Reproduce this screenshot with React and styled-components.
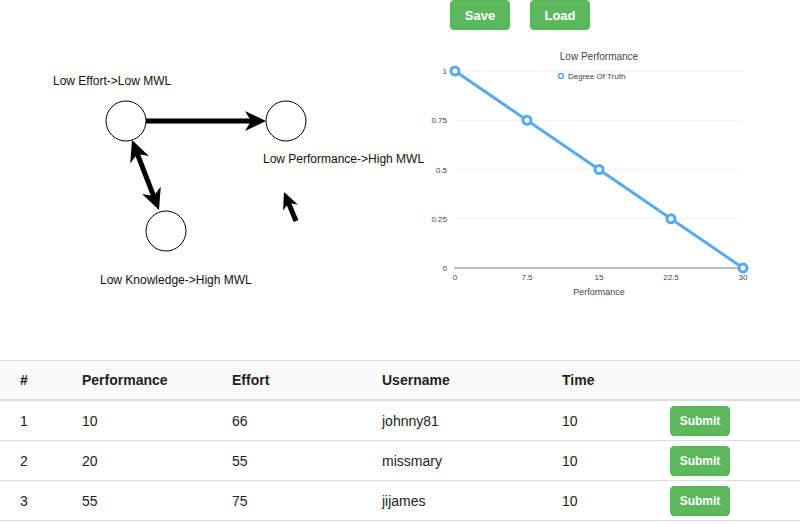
import React from 'react';
import styled, { createGlobalStyle } from 'styled-components';

const GlobalStyle = createGlobalStyle`
  body {
    margin: 0;
    font-family: "Liberation Sans", Arial, Helvetica, sans-serif;
    color: #222;
    background: #fff;
  }
`;

const rows = [
  { id: 1, performance: 10, effort: 66, username: 'johnny81', time: 10 },
  { id: 2, performance: 20, effort: 55, username: 'missmary', time: 10 },
  { id: 3, performance: 55, effort: 75, username: 'jijames', time: 10 },
];

// arrow head polygon, tip at (x2,y2), pointing away from (x1,y1)
function head(x1, y1, x2, y2, s) {
  const dx = x2 - x1;
  const dy = y2 - y1;
  const len = Math.sqrt(dx * dx + dy * dy);
  const ux = dx / len;
  const uy = dy / len;
  const px = -uy;
  const py = ux;
  const L = 21 * s;
  const W = 10 * s;
  const N = 15 * s;
  const pts = [
    [x2, y2],
    [x2 - ux * L + px * W, y2 - uy * L + py * W],
    [x2 - ux * N, y2 - uy * N],
    [x2 - ux * L - px * W, y2 - uy * L - py * W],
  ];
  return pts.map((p) => p.join(',')).join(' ');
}

function Arrow({ x1, y1, x2, y2, both, scale = 1 }) {
  const dx = x2 - x1;
  const dy = y2 - y1;
  const len = Math.sqrt(dx * dx + dy * dy);
  const ux = dx / len;
  const uy = dy / len;
  const sx = both ? x1 + ux * 10 : x1;
  const sy = both ? y1 + uy * 10 : y1;
  return (
    <g>
      <line x1={sx} y1={sy} x2={x2 - ux * 10 * scale} y2={y2 - uy * 10 * scale} stroke="#000" strokeWidth="5" />
      <polygon points={head(x1, y1, x2, y2, scale)} fill="#000" />
      {both && <polygon points={head(x2, y2, x1, y1, scale)} fill="#000" />}
    </g>
  );
}

function Diagram() {
  return (
    <DiagramSvg width="400" height="360">
      <DiagramLabel x="53" y="85">Low Effort-&gt;Low MWL</DiagramLabel>
      <DiagramLabel x="263" y="163">Low Performance-&gt;High MWL</DiagramLabel>
      <DiagramLabel x="100" y="284">Low Knowledge-&gt;High MWL</DiagramLabel>
      <circle cx="126" cy="121" r="20" fill="#fff" stroke="#000" strokeWidth="1" />
      <circle cx="286" cy="121" r="20" fill="#fff" stroke="#000" strokeWidth="1" />
      <circle cx="166" cy="231" r="20" fill="#fff" stroke="#000" strokeWidth="1" />
      <Arrow x1={146} y1={121} x2={266} y2={121} />
      <Arrow x1={132} y1={140} x2={159} y2={210} both />
      <Arrow x1={296} y1={221} x2={284} y2={192} scale={0.8} />
    </DiagramSvg>
  );
}

function Chart() {
  const x0 = 55;
  const x1 = 343;
  const y0 = 228;
  const y1 = 31;
  const xs = [0, 7.5, 15, 22.5, 30];
  const ys = [1, 0.75, 0.5, 0.25, 0];
  const px = (v) => x0 + (v / 30) * (x1 - x0);
  const py = (v) => y0 - v * (y0 - y1);
  const pts = xs.map((x, i) => [px(x), py(ys[i])]);
  return (
    <ChartSvg width="400" height="270">
      <ChartTitle x="199" y="20">Low Performance</ChartTitle>
      <circle cx="161" cy="36" r="2.4" fill="#fff" stroke="#57a9f2" strokeWidth="1.5" />
      <AxisText x="168" y="39">Degree Of Truth</AxisText>
      {[1, 0.75, 0.5, 0.25].map((v) => (
        <line key={v} x1={x0} x2={x1} y1={py(v)} y2={py(v)} stroke="#f1f1f1" strokeWidth="1" />
      ))}
      <line x1={x0 - 1} x2={x1} y1={y0} y2={y0} stroke="#777" strokeWidth="1" />
      {[1, 0.75, 0.5, 0.25, 0].map((v) => (
        <AxisText key={v} x="47" y={py(v) + 3} textAnchor="end">{v}</AxisText>
      ))}
      {xs.map((v) => (
        <AxisText key={v} x={px(v)} y="240" textAnchor="middle">{v}</AxisText>
      ))}
      <AxisTitle x="199" y="255">Performance</AxisTitle>
      <polyline points={pts.map((p) => p.join(',')).join(' ')} fill="none" stroke="#57a9f2" strokeWidth="3" />
      {pts.map((p, i) => (
        <circle key={i} cx={p[0]} cy={p[1]} r="4" fill="#fff" stroke="#57a9f2" strokeWidth="3" />
      ))}
    </ChartSvg>
  );
}

export default function App() {
  return (
    <Page>
      <GlobalStyle />
      <Top>
        <Diagram />
        <RightPane>
          <ButtonRow>
            <ActionButton>Save</ActionButton>
            <ActionButton>Load</ActionButton>
          </ButtonRow>
          <Chart />
        </RightPane>
      </Top>
      <Table>
        <HeaderRow>
          <HeadCell>#</HeadCell>
          <HeadCell>Performance</HeadCell>
          <HeadCell>Effort</HeadCell>
          <HeadCell>Username</HeadCell>
          <HeadCell>Time</HeadCell>
          <HeadCell />
        </HeaderRow>
        {rows.map((r) => (
          <Row key={r.id}>
            <Cell>{r.id}</Cell>
            <Cell>{r.performance}</Cell>
            <Cell>{r.effort}</Cell>
            <Cell>{r.username}</Cell>
            <Cell>{r.time}</Cell>
            <Cell>
              <SubmitButton>Submit</SubmitButton>
            </Cell>
          </Row>
        ))}
      </Table>
    </Page>
  );
}

const Page = styled.div`
  width: 802px;
  height: 524px;
  overflow: hidden;
`;

const Top = styled.div`
  display: flex;
  height: 360px;
`;

const DiagramSvg = styled.svg`
  display: block;
  flex: none;
  overflow: visible;
  position: relative;
  z-index: 1;
`;

const DiagramLabel = styled.text`
  font-family: "Liberation Sans", Arial, sans-serif;
  font-size: 12px;
  fill: #111;
`;

const RightPane = styled.div`
  display: flex;
  flex-direction: column;
  width: 400px;
`;

const ButtonRow = styled.div`
  display: flex;
  gap: 20px;
  padding-left: 50px;
  height: 40px;
`;

const ActionButton = styled.button`
  width: 60px;
  height: 30px;
  border: 1px solid #54b554;
  border-radius: 4px;
  background: #5cb85c;
  color: #fff;
  font-family: "Liberation Sans", Arial, sans-serif;
  font-weight: bold;
  font-size: 13px;
  padding: 0;
  cursor: pointer;
`;

const ChartSvg = styled.svg`
  display: block;
`;

const ChartTitle = styled.text`
  font-family: "Liberation Sans", Arial, sans-serif;
  font-size: 10px;
  fill: #444;
  text-anchor: middle;
`;

const AxisText = styled.text`
  font-family: "Liberation Sans", Arial, sans-serif;
  font-size: 8px;
  fill: #444;
`;

const AxisTitle = styled.text`
  font-family: "Liberation Sans", Arial, sans-serif;
  font-size: 9px;
  fill: #444;
  text-anchor: middle;
`;

const Table = styled.div`
  width: 800px;
  border-top: 1px solid #ddd;
`;

const Row = styled.div`
  display: grid;
  grid-template-columns: 62px 150px 150px 180px 108px 1fr;
  align-items: center;
  height: 39px;
  padding-left: 20px;
  border-bottom: 1px solid #ddd;
  font-size: 14px;
  color: #222;
`;

const HeaderRow = styled(Row)`
  background: #fafafa;
  font-weight: bold;
  border-bottom: 2px solid #ddd;
  height: 38px;
`;

const HeadCell = styled.div``;

const Cell = styled.div``;

const SubmitButton = styled.button`
  width: 60px;
  height: 30px;
  border: 1px solid #54b554;
  border-radius: 4px;
  background: #5cb85c;
  color: #fff;
  font-family: "Liberation Sans", Arial, sans-serif;
  font-weight: bold;
  font-size: 12px;
  padding: 0;
  cursor: pointer;
`;
